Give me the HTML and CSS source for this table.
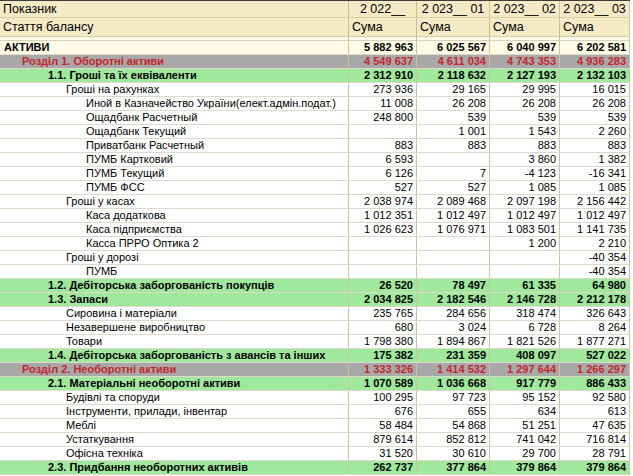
FILE: index.html
```html
<!DOCTYPE html>
<html lang="uk">
<head>
<meta charset="utf-8">
<title>Баланс</title>
<link rel="stylesheet" href="styles.css">
</head>
<body>
<table class="grid">
  <colgroup>
    <col class="c-name"><col class="c-a"><col class="c-b"><col class="c-c"><col class="c-d">
  </colgroup>
  <thead>
    <tr class="h1">
      <th class="hl">Показник</th><th>2 022__</th><th>2 023__ 01</th><th>2 023__ 02</th><th>2 023__ 03</th>
    </tr>
    <tr class="h2">
      <th class="hl">Стаття балансу</th><th class="hl">Сума</th><th class="hl">Сума</th><th class="hl">Сума</th><th class="hl">Сума</th>
    </tr>
    <tr class="gap"><th></th><th></th><th></th><th></th><th></th></tr>
  </thead>
  <tbody>
    <tr class="top"><td class="l0">АКТИВИ</td><td>5 882 963</td><td>6 025 567</td><td>6 040 997</td><td>6 202 581</td></tr>
    <tr class="sec"><td class="l1">Розділ 1. Оборотні активи</td><td>4 549 637</td><td>4 611 034</td><td>4 743 353</td><td>4 936 283</td></tr>
    <tr class="grp"><td class="l2">1.1. Гроші та їх еквіваленти</td><td>2 312 910</td><td>2 118 632</td><td>2 127 193</td><td>2 132 103</td></tr>
    <tr><td class="l3">Гроші на рахунках</td><td>273 936</td><td>29 165</td><td>29 995</td><td>16 015</td></tr>
    <tr><td class="l4">Иной в Казначейство України(елект.адмін.подат.)</td><td>11 008</td><td>26 208</td><td>26 208</td><td>26 208</td></tr>
    <tr><td class="l4">Ощадбанк Расчетный</td><td>248 800</td><td>539</td><td>539</td><td>539</td></tr>
    <tr><td class="l4">Ощадбанк Текущий</td><td></td><td>1 001</td><td>1 543</td><td>2 260</td></tr>
    <tr><td class="l4">Приватбанк Расчетный</td><td>883</td><td>883</td><td>883</td><td>883</td></tr>
    <tr><td class="l4">ПУМБ Картковий</td><td>6 593</td><td></td><td>3 860</td><td>1 382</td></tr>
    <tr><td class="l4">ПУМБ Текущий</td><td>6 126</td><td>7</td><td>-4 123</td><td>-16 341</td></tr>
    <tr><td class="l4">ПУМБ ФСС</td><td>527</td><td>527</td><td>1 085</td><td>1 085</td></tr>
    <tr><td class="l3">Гроші у касах</td><td>2 038 974</td><td>2 089 468</td><td>2 097 198</td><td>2 156 442</td></tr>
    <tr><td class="l4">Каса додаткова</td><td>1 012 351</td><td>1 012 497</td><td>1 012 497</td><td>1 012 497</td></tr>
    <tr><td class="l4">Каса підприємства</td><td>1 026 623</td><td>1 076 971</td><td>1 083 501</td><td>1 141 735</td></tr>
    <tr><td class="l4">Касса ПРРО Оптика 2</td><td></td><td></td><td>1 200</td><td>2 210</td></tr>
    <tr><td class="l3">Гроші у дорозі</td><td></td><td></td><td></td><td>-40 354</td></tr>
    <tr><td class="l4">ПУМБ</td><td></td><td></td><td></td><td>-40 354</td></tr>
    <tr class="grp"><td class="l2">1.2. Дебіторська заборгованість покупців</td><td>26 520</td><td>78 497</td><td>61 335</td><td>64 980</td></tr>
    <tr class="grp"><td class="l2">1.3. Запаси</td><td>2 034 825</td><td>2 182 546</td><td>2 146 728</td><td>2 212 178</td></tr>
    <tr><td class="l3">Сировина і матеріали</td><td>235 765</td><td>284 656</td><td>318 474</td><td>326 643</td></tr>
    <tr><td class="l3">Незавершене виробництво</td><td>680</td><td>3 024</td><td>6 728</td><td>8 264</td></tr>
    <tr><td class="l3">Товари</td><td>1 798 380</td><td>1 894 867</td><td>1 821 526</td><td>1 877 271</td></tr>
    <tr class="grp"><td class="l2">1.4. Дебіторська заборгованість з авансів та інших</td><td>175 382</td><td>231 359</td><td>408 097</td><td>527 022</td></tr>
    <tr class="sec"><td class="l1">Розділ 2. Необоротні активи</td><td>1 333 326</td><td>1 414 532</td><td>1 297 644</td><td>1 266 297</td></tr>
    <tr class="grp"><td class="l2">2.1. Матеріальні необоротні активи</td><td>1 070 589</td><td>1 036 668</td><td>917 779</td><td>886 433</td></tr>
    <tr><td class="l3">Будівлі та споруди</td><td>100 295</td><td>97 723</td><td>95 152</td><td>92 580</td></tr>
    <tr><td class="l3">Інструменти, прилади, інвентар</td><td>676</td><td>655</td><td>634</td><td>613</td></tr>
    <tr><td class="l3">Меблі</td><td>58 484</td><td>54 868</td><td>51 251</td><td>47 635</td></tr>
    <tr><td class="l3">Устаткування</td><td>879 614</td><td>852 812</td><td>741 042</td><td>716 814</td></tr>
    <tr><td class="l3">Офісна техніка</td><td>31 520</td><td>30 610</td><td>29 700</td><td>28 791</td></tr>
    <tr class="grp"><td class="l2">2.3. Придбання необоротних активів</td><td>262 737</td><td>377 864</td><td>379 864</td><td>379 864</td></tr>
  </tbody>
</table>
</body>
</html>
```

FILE: styles.css
```css
html, body {
  margin: 0;
  padding: 0;
  background: #ffffff;
}

.grid {
  border-collapse: separate;
  border-spacing: 0;
  table-layout: fixed;
  width: 630px;
  font-family: "Liberation Sans", Arial, sans-serif;
  color: #000;
  border-top: 1px solid #3c3c3c;
}

.c-name { width: 349px; }
.c-a { width: 68px; }
.c-b { width: 73px; }
.c-c { width: 70px; }
.c-d { width: 70px; }

thead th {
  background: #f4eac6;
  font-weight: normal;
  font-size: 12.5px;
  text-align: center;
  padding: 0;
  border-right: 1px solid #cbbf90;
  border-bottom: 1px solid #d8cfa8;
  white-space: nowrap;
  overflow: hidden;
}

thead th.hl {
  text-align: left;
  padding-left: 3px;
}

.h1 th {
  height: 16px;
  line-height: 16px;
}

.h2 th {
  height: 18px;
  line-height: 18px;
}

.gap th {
  height: 3px;
  line-height: 3px;
  background: #fdfbe8;
  border-bottom: 1px solid #d8d2b8;
}

tbody td {
  font-size: 11px;
  line-height: 13px;
  height: 13px;
  padding: 0 3px 0 0;
  text-align: right;
  white-space: nowrap;
  overflow: hidden;
  border-right: 1px solid #cdc49c;
  border-bottom: 1px solid #dedacb;
}

tbody td:last-child,
thead th:last-child {
  border-right: 1px solid #cdc49c;
}

tbody td.l0,
tbody td.l1,
tbody td.l2,
tbody td.l3,
tbody td.l4 {
  text-align: left;
  padding-right: 0;
}

.l0 { padding-left: 4px; }
.l1 { padding-left: 22px; }
.l2 { padding-left: 48px; }
.l3 { padding-left: 66px; }
.l4 { padding-left: 86px; }

.top td {
  background: #fefbe6;
  font-weight: bold;
}

.sec td {
  background: #a8a8a8;
  color: #c3262e;
  font-weight: bold;
}

.grp td {
  background: #9fe89c;
  font-weight: bold;
}
```
